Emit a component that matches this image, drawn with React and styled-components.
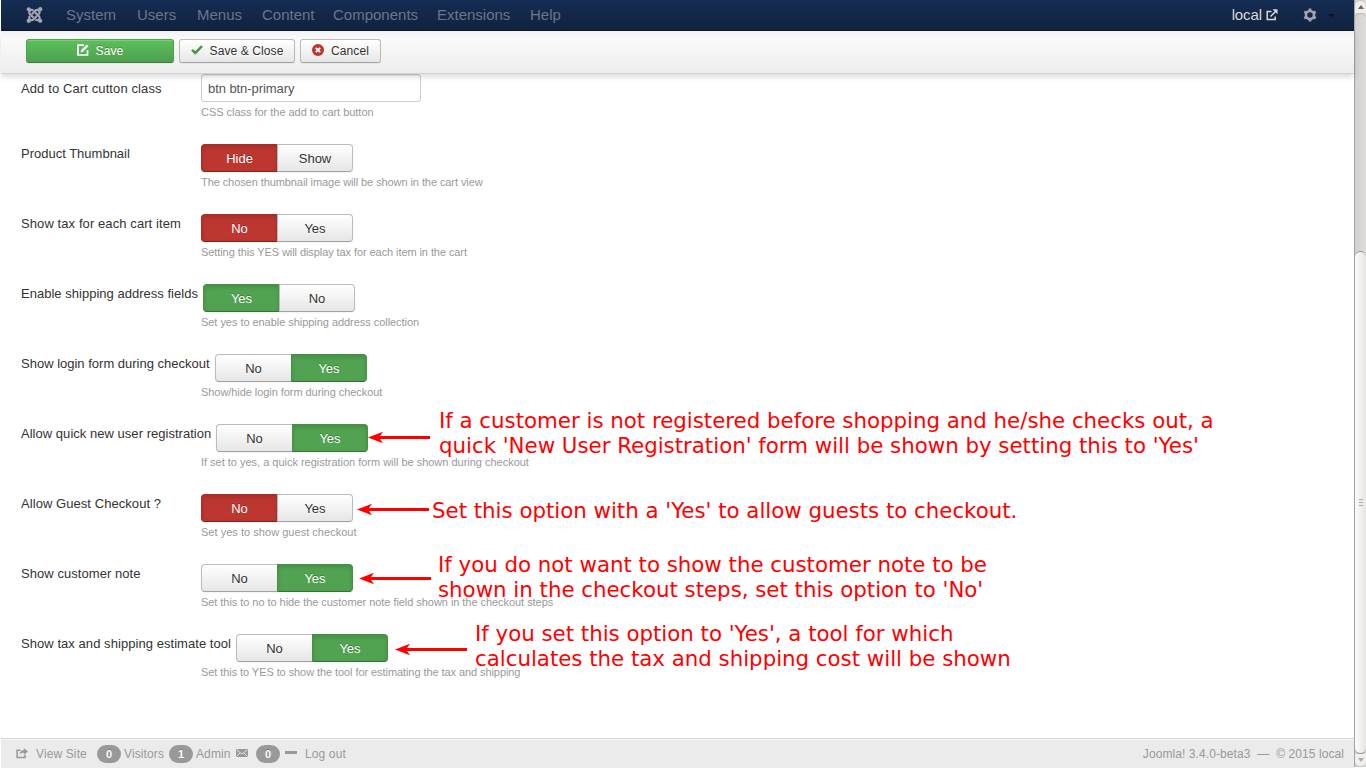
import React from "react";
import styled, { createGlobalStyle } from "styled-components";
import { FaJoomla } from "react-icons/fa";

const GlobalStyle = createGlobalStyle`
  * { box-sizing: border-box; }
  body { margin: 0; background: #fff; overflow: hidden; }
`;

const Page = styled.div`
  position: relative;
  display: flex;
  width: 1366px;
  height: 768px;
  background: #fff;
  font: 13px/18px "Liberation Sans", Arial, sans-serif;
  color: #333;
  white-space: nowrap;
`;

const Main = styled.div`
  display: flex;
  flex-direction: column;
  width: 1353px;
  margin-left: 1px;
`;

const Navbar = styled.nav`
  display: flex;
  flex: none;
  height: 31px;
  padding: 0 20px 0 25px;
  background: linear-gradient(#152d53, #10223e);
  border-bottom: 1px solid #0c192e;
`;

const Brand = styled(FaJoomla)`
  flex: none;
  width: 17px;
  height: 18px;
  margin: 6px 23px 0 0;
  color: #a0a6b1;
`;

const MenuItem = styled.span`
  width: ${(p) => p.$w}px;
  font-size: 15px;
  line-height: 30px;
  color: #6b7688;
`;

const NavRight = styled.div`
  display: flex;
  margin-left: auto;
  color: #d9d9d9;
  font-size: 15px;
  line-height: 30px;
  letter-spacing: -0.1px;

  svg { flex: none; }
`;

const Toolbar = styled.div`
  position: relative;
  z-index: 1;
  display: flex;
  flex: none;
  gap: 5px;
  height: 43px;
  padding: 8px 25px;
  background: linear-gradient(#f2f2f2, #fafafa 20%, #ededed);
  border-bottom: 1px solid #d2d2d2;
  box-shadow: 0 3px 6px rgba(0, 0, 0, 0.14);
`;

const ToolButton = styled.button`
  display: flex;
  align-items: center;
  justify-content: center;
  gap: 7px;
  width: ${(p) => p.$w}px;
  height: 24px;
  padding: 0;
  border: 1px solid ${(p) => (p.$primary ? "#46a546" : "#bbb")};
  border-bottom-color: ${(p) => (p.$primary ? "#387e38" : "#a2a2a2")};
  border-radius: 3px;
  background: ${(p) =>
    p.$primary ? "linear-gradient(#5bc05b, #4fa04f)" : "linear-gradient(#fff, #e6e6e6)"};
  box-shadow: inset 0 1px 0 rgba(255, 255, 255, 0.2), 0 1px 2px rgba(0, 0, 0, 0.05);
  color: ${(p) => (p.$primary ? "#fff" : "#333")};
  text-shadow: ${(p) => (p.$primary ? "0 -1px 0 rgba(0,0,0,.25)" : "0 1px 1px rgba(255,255,255,.75)")};
  font: 12px/22px "Liberation Sans", Arial, sans-serif;
  letter-spacing: 0.1px;

  svg { flex: none; position: relative; top: -1px; }
`;

const Form = styled.form`
  flex: 1;
  padding-left: 20px;
`;

const Row = styled.div`
  height: 70px;
`;

const Line = styled.div`
  display: flex;
  height: 28px;
`;

const Label = styled.label`
  width: ${(p) => p.$w || 180}px;
  padding-top: ${(p) => p.$pad || 1}px;
  letter-spacing: ${(p) => p.$ls || 0}px;
`;

const Field = styled.input`
  width: 220px;
  height: 28px;
  padding: 4px 6px;
  border: 1px solid #ccc;
  border-radius: 3px;
  background: #fff;
  box-shadow: inset 0 1px 1px rgba(0, 0, 0, 0.075);
  color: #555;
  font: 13px/18px "Liberation Sans", Arial, sans-serif;
  letter-spacing: -0.07px;
`;

const Help = styled.div`
  margin: 1px 0 0 180px;
  font-size: 11px;
  letter-spacing: ${(p) => p.$ls || 0}px;
  color: #999;
`;

const tones = {
  green: ["#51a351", "#469146", "#387038"],
  red: ["#bd362f", "#a52f29", "#802420"],
};

const Option = styled.button`
  width: 77px;
  height: 28px;
  padding: 1px 0 0;
  font: 13px/25px "Liberation Sans", Arial, sans-serif;
  border: 1px solid ${(p) => (p.$tone ? tones[p.$tone][1] : "#bbb")};
  border-bottom-color: ${(p) => (p.$tone ? tones[p.$tone][2] : "#a2a2a2")};
  background: ${(p) => (p.$tone ? tones[p.$tone][0] : "linear-gradient(#fff, #e6e6e6)")};
  color: ${(p) => (p.$tone ? "#fff" : "#333")};
  text-shadow: ${(p) => (p.$tone ? "0 -1px 0 rgba(0,0,0,.25)" : "0 1px 1px rgba(255,255,255,.75)")};
  box-shadow: ${(p) =>
    p.$tone
      ? "inset 0 2px 4px rgba(0,0,0,.15), 0 1px 2px rgba(0,0,0,.05)"
      : "inset 0 1px 0 rgba(255,255,255,.2), 0 1px 2px rgba(0,0,0,.05)"};

  &:first-child { border-radius: 4px 0 0 4px; }
  &:last-child { border-radius: 0 4px 4px 0; margin-left: -1px; width: 76px; }
`;

const Footer = styled.footer`
  display: flex;
  flex: none;
  height: 30px;
  padding: 2px 10px 0 15px;
  border-top: 1px solid #d4d4d4;
  box-shadow: inset 0 1px 0 #f8f8f8;
  background: #ebebeb;
  color: #999;
  font-size: 12px;
  line-height: 26px;

  svg { flex: none; }
`;

const FootText = styled.span`
  width: ${(p) => (p.$w ? p.$w + "px" : "auto")};
  letter-spacing: 0.12px;
  margin-left: ${(p) => p.$ml || 0}px;
`;

const Badge = styled.span`
  width: 24px;
  height: 18px;
  margin: 4px 3px 0 0;
  border-radius: 9px;
  background: #999;
  color: #fff;
  text-align: center;
  font-size: 11px;
  font-weight: bold;
  line-height: 18px;
  text-shadow: 0 -1px 0 rgba(0, 0, 0, 0.25);
`;

const Copyright = styled.span`
  margin-left: auto;
  white-space: pre;
  letter-spacing: 0.08px;
`;

const Scrollbar = styled.div`
  display: flex;
  flex-direction: column;
  width: 12px;
  height: 767px;
  border-left: 1px solid #a5a19c;
  background: linear-gradient(90deg, #d3d1ce, #dfdddb);
`;

const ScrollButton = styled.div`
  display: flex;
  flex: none;
  align-items: center;
  justify-content: center;
  height: ${(p) => p.$h}px;
  border: 1px solid #c4c1bd;
  border-width: ${(p) => (p.$end ? "0 0 1px" : "1px 0 0")};
  border-radius: ${(p) => (p.$end ? "0 0 6px 6px" : "6px 6px 0 0")};
  background: #f1efed;
`;

const Track = styled.div`
  flex: none;
  height: 238px;
  border: 1px solid #b5b2ae;
  border-width: 1px 0 0;
  border-radius: 6px 6px 0 0;
  background: linear-gradient(90deg, #d3d1ce, #dfdddb);
`;

const Thumb = styled.div`
  display: flex;
  flex: 1;
  flex-direction: column;
  align-items: center;
  justify-content: center;
  gap: 2px;
  border: 1px solid #918d88;
  border-width: 1px 0;
  border-radius: 6px;
  background: linear-gradient(90deg, #fbfbfa, #e7e5e3);
`;

const Grip = styled.i`
  width: 4px;
  height: 1px;
  background: #aaa;
`;

const Note = styled.div`
  position: absolute;
  z-index: 2;
  left: ${(p) => p.$x}px;
  top: ${(p) => p.$y}px;
  color: #f00;
  font: 21.33px/25px "DejaVu Sans", sans-serif;
  letter-spacing: -0.012px;
`;

const NoteLine = styled.div``;

const Arrow = styled.svg`
  position: absolute;
  z-index: 2;
  left: ${(p) => p.$x}px;
  top: ${(p) => p.$y}px;
`;

const rows = [
  { label: "Product Thumbnail", hls: -0.08, help: "The chosen thumbnail image will be shown in the cart view", opts: ["Hide", "Show"], on: 0, tone: "red" },
  { label: "Show tax for each cart item", ls: 0.09, hls: -0.08, help: "Setting this YES will display tax for each item in the cart", opts: ["No", "Yes"], on: 0, tone: "red" },
  { label: "Enable shipping address fields", ls: 0.02, w: 182, hls: -0.045, help: "Set yes to enable shipping address collection", opts: ["Yes", "No"], on: 0, tone: "green" },
  { label: "Show login form during checkout", w: 194, hls: -0.06, help: "Show/hide login form during checkout", opts: ["No", "Yes"], on: 1, tone: "green" },
  { label: "Allow quick new user registration", ls: 0.03, w: 195, hls: -0.015, help: "If set to yes, a quick registration form will be shown during checkout", opts: ["No", "Yes"], on: 1, tone: "green" },
  { label: "Allow Guest Checkout ?", ls: 0.06, hls: 0.03, help: "Set yes to show guest checkout", opts: ["No", "Yes"], on: 0, tone: "red" },
  { label: "Show customer note", ls: 0.06, hls: -0.05, help: "Set this to no to hide the customer note field shown in the checkout steps", opts: ["No", "Yes"], on: 1, tone: "green" },
  { label: "Show tax and shipping estimate tool", ls: 0.055, w: 215, hls: -0.075, help: "Set this to YES to show the tool for estimating the tax and shipping", opts: ["No", "Yes"], on: 1, tone: "green" },
];

const menu = [
  ["System", 71], ["Users", 60], ["Menus", 65], ["Content", 71],
  ["Components", 104], ["Extensions", 93], ["Help", 40],
];

const notes = [
  { x: 439, y: 408, lines: ["If a customer is not registered before shopping and he/she checks out, a", "quick 'New User Registration' form will be shown by setting this to 'Yes'"] },
  { x: 432, y: 498, lines: ["Set this option with a 'Yes' to allow guests to checkout."] },
  { x: 438, y: 552, lines: ["If you do not want to show the customer note to be", "shown in the checkout steps, set this option to 'No'"] },
  { x: 475, y: 621, lines: ["If you set this option to 'Yes', a tool for which", "calculates the tax and shipping cost will be shown"] },
];

const arrows = [
  { x: 368, y: 431, w: 62 },
  { x: 357, y: 503, w: 72 },
  { x: 359, y: 572, w: 72 },
  { x: 395, y: 643, w: 72 },
];

export default function App() {
  return (
    <>
      <GlobalStyle />
      <Page>
        <Main>
          <Navbar>
            <Brand />
            {menu.map(([name, w]) => <MenuItem key={name} $w={w}>{name}</MenuItem>)}
            <NavRight>
              local
              <svg width="12" height="12" viewBox="0 0 12 12" fill="none" stroke="#d9d9d9" strokeWidth="1.5" style={{ margin: "9px 25px 0 4px" }}>
                <path d="M5.500 2.500H1.200V10.500H9.200V7.500M4.500 7.500L10 2" />
                <path d="M6.500 .3H11.500V5.300Z" fill="#d9d9d9" stroke="none" />
              </svg>
              <svg width="14" height="14" viewBox="0 0 14 14" style={{ margin: "8px 10px 0 0" }}>
                <circle cx="7" cy="7" r="4" fill="none" stroke="#a0a6b1" strokeWidth="2.600" />
                <g stroke="#a0a6b1" strokeWidth="2.700">
                  <path d="M7 .5V3M7 11V13.500M1.300 3.800L3.500 5M10.500 9L12.700 10.200M1.300 10.200L3.500 9M10.500 5L12.700 3.800" />
                </g>
              </svg>
              <svg width="8" height="5" viewBox="0 0 8 5" style={{ margin: "14px -1px 0 0" }}><path d="M1 0H7.500L4.200 3.500Z" fill="#091424" /></svg>
            </NavRight>
          </Navbar>
          <Toolbar>
            <ToolButton $primary $w={148}>
              <svg width="12" height="12" viewBox="0 0 12 12" fill="none" stroke="#fff" strokeWidth="1.700">
                <path d="M7 1.200H1V11H10.500V6" /><path d="M3.500 8.500L4.200 6L9.700 .5L11.500 2.300L6 7.800Z" fill="#fff" stroke="none" />
              </svg>
              Save
            </ToolButton>
            <ToolButton $w={116}>
              <svg width="12" height="10" viewBox="0 0 12 10" fill="none" stroke="#469a46" strokeWidth="2.500"><path d="M1 4.800L4.300 8L11 1.200" /></svg>
              Save &amp; Close
            </ToolButton>
            <ToolButton $w={81}>
              <svg width="12" height="12" viewBox="0 0 12 12"><circle cx="6" cy="6" r="6" fill="#bd362f" /><path d="M3.800 3.800L8.200 8.200M8.200 3.800L3.800 8.200" stroke="#fff" strokeWidth="1.900" /></svg>
              Cancel
            </ToolButton>
          </Toolbar>
          <Form onSubmit={(e) => e.preventDefault()}>
            <Row>
              <Line>
                <Label $pad={6} $ls={0.11}>Add to Cart cutton class</Label>
                <Field defaultValue="btn btn-primary" />
              </Line>
              <Help $ls={-0.03}>CSS class for the add to cart button</Help>
            </Row>
            {rows.map((r) => (
              <Row key={r.label}>
                <Line>
                  <Label $w={r.w} $ls={r.ls}>{r.label}</Label>
                  <div>
                    {r.opts.map((o, i) => (
                      <Option type="button" key={o} $tone={i === r.on ? r.tone : undefined}>{o}</Option>
                    ))}
                  </div>
                </Line>
                <Help $ls={r.hls}>{r.help}</Help>
              </Row>
            ))}
          </Form>
          <Footer>
            <svg width="12" height="11" viewBox="0 0 13 12" style={{ marginTop: 7 }}>
              <path d="M5 2.500H1.200V10.300H9.800V7.500" fill="none" stroke="#999" strokeWidth="1.700" />
              <path d="M8.500 0L13 3.800L8.500 7.500V5.200C6.500 5.200 5 5.800 3.800 7.500C4 4.500 5.500 2.500 8.500 2.300Z" fill="#999" />
            </svg>
            <FootText $ml={8} $w={61}>View Site</FootText>
            <Badge>0</Badge>
            <FootText $w={45}>Visitors</FootText>
            <Badge>1</Badge>
            <FootText $w={40}>Admin</FootText>
            <svg width="12" height="8" viewBox="0 0 12 8" style={{ margin: "8px 8px 0 0" }}>
              <rect width="12" height="8" fill="#999" /><path d="M0.500 .8L6 5L11.500 .8M.5 7.500L4 4M11.500 7.500L8 4" fill="none" stroke="#ebebeb" strokeWidth=".9" />
            </svg>
            <Badge>0</Badge>
            <svg width="12" height="3" viewBox="0 0 12 3" style={{ margin: "10px 8px 0 2px" }}><rect width="12" height="3" fill="#999" /></svg>
            <FootText>Log out</FootText>
            <Copyright>{"Joomla! 3.4.0-beta3  —  © 2015 local"}</Copyright>
          </Footer>
        </Main>
        <Scrollbar>
          <ScrollButton $h={13}><svg width="6" height="4" viewBox="0 0 6 4"><path d="M0 4L3 0L6 4Z" fill="#666" /></svg></ScrollButton>
          <Track />
          <Thumb><Grip /><Grip /><Grip /></Thumb>
          <ScrollButton $end $h={13}><svg width="6" height="4" viewBox="0 0 6 4"><path d="M0 0H6L3 4Z" fill="#aaa" /></svg></ScrollButton>
        </Scrollbar>
        {arrows.map((a) => (
          <Arrow key={a.y} $x={a.x} $y={a.y} width={a.w} height="13" viewBox={`0 0 ${a.w} 13`}>
            <path d={`M10 6.500H${a.w}`} stroke="#f00" strokeWidth="3" />
            <path d="M0 6.500L15 .8L11 6.500L15 12.200Z" fill="#f00" />
          </Arrow>
        ))}
        {notes.map((n) => (
          <Note key={n.y} $x={n.x} $y={n.y}>
            {n.lines.map((l) => <NoteLine key={l}>{l}</NoteLine>)}
          </Note>
        ))}
      </Page>
    </>
  );
}
